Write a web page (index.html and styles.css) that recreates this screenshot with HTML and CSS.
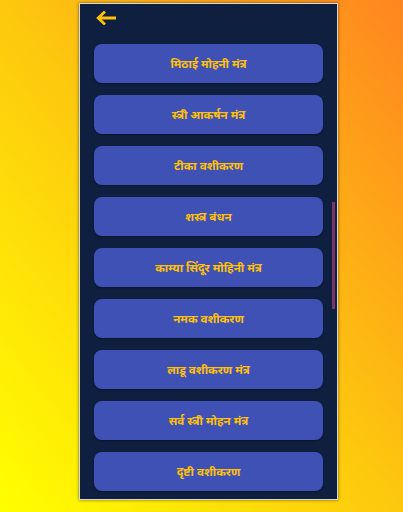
FILE: index.html
```html
<!DOCTYPE html>
<html lang="hi">
<head>
<meta charset="utf-8">
<link rel="stylesheet" href="styles.css">
</head>
<body>
<div class="stage">
  <div class="panel">
    <div class="header">
      <svg class="back" width="20" height="14" viewBox="0 0 20 14" aria-label="back">
        <path d="M19 7H3M8 1.5L2.2 7L8 12.5" fill="none" stroke="#ffc107" stroke-width="2.8" stroke-linecap="square"/>
      </svg>
    </div>
    <div class="list">
      <div class="item">मिठाई मोहनी मंत्र</div>
      <div class="item">स्त्री आकर्षन मंत्र</div>
      <div class="item">टीका वशीकरण</div>
      <div class="item">शस्त्र बंधन</div>
      <div class="item">काम्या सिंदूर मोहिनी मंत्र</div>
      <div class="item">नमक वशीकरण</div>
      <div class="item">लाडू वशीकरण मंत्र</div>
      <div class="item">सर्व स्त्री मोहन मंत्र</div>
      <div class="item">दृष्टी वशीकरण</div>
    </div>
    <div class="scrollbar"></div>
  </div>
</div>
</body>
</html>
```
FILE: styles.css
```css
html, body {
  margin: 0;
  padding: 0;
}
body {
  width: 403px;
  height: 512px;
  overflow: hidden;
  font-family: "Noto Sans", "Noto Sans Devanagari", "Lohit Devanagari", sans-serif;
}
.stage {
  width: 403px;
  height: 512px;
  background: linear-gradient(to top right, #ffff00 0%, #fdc80e 50%, #ff8520 100%);
  display: flex;
  justify-content: flex-start;
  align-items: flex-start;
  padding: 3px 0 0 79px;
  box-sizing: border-box;
}
.panel {
  position: relative;
  width: 259px;
  height: 497px;
  box-sizing: border-box;
  border: 1px solid #d8d8d8;
  background: #0f1f40;
  box-shadow: 0 0 3px rgba(0, 0, 0, 0.55);
  overflow: hidden;
}
.header {
  height: 40px;
  padding: 7px 0 0 16px;
  box-sizing: border-box;
}
.back {
  display: block;
}
.list {
  display: flex;
  flex-direction: column;
  gap: 12px;
  padding: 0 14px;
}
.item {
  height: 39px;
  flex: none;
  background: #3f51b5;
  border-radius: 8px;
  box-shadow: 0 1px 2px rgba(0, 0, 0, 0.35);
  color: #ffc107;
  font-size: 11.6px;
  font-weight: bold;
  display: flex;
  align-items: center;
  justify-content: center;
}
.scrollbar {
  position: absolute;
  right: 2px;
  top: 198px;
  width: 3px;
  height: 107px;
  background: #7a3466;
}
```
